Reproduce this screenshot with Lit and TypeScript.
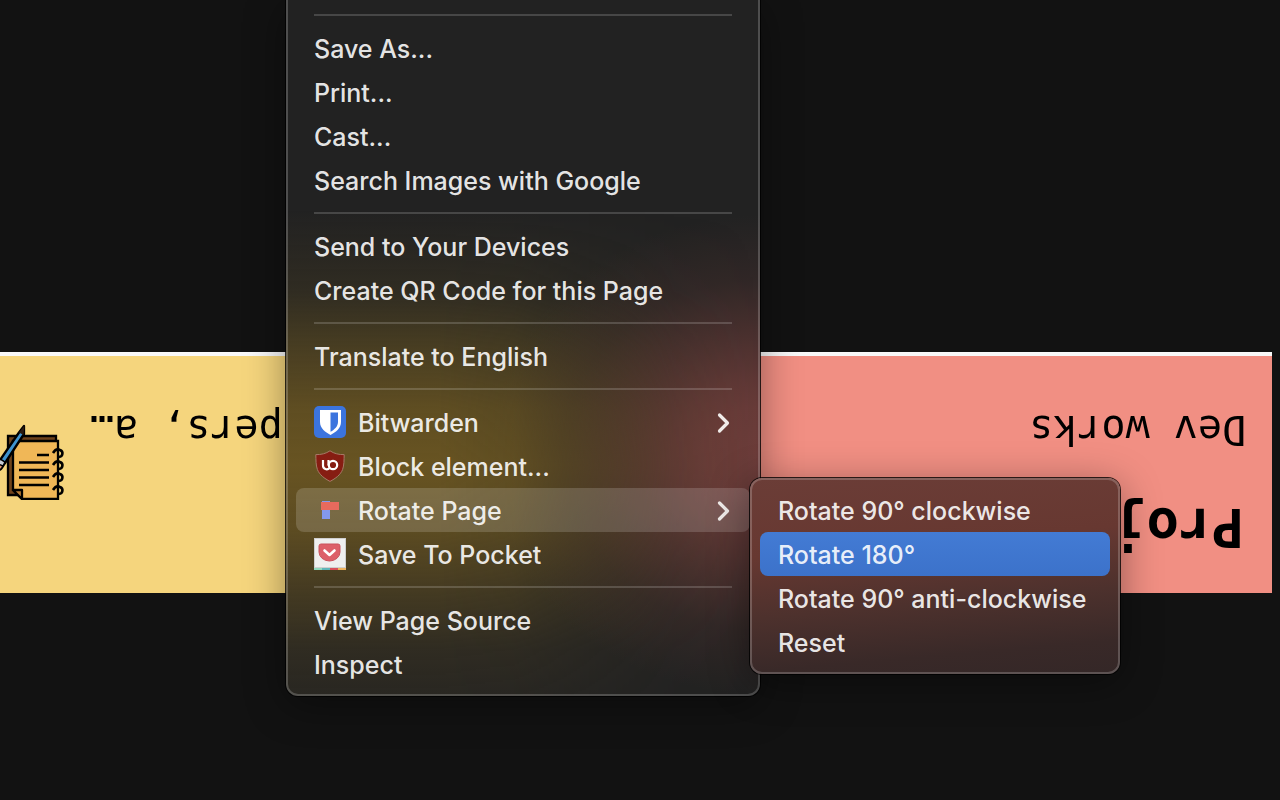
import { LitElement, html, css, svg, nothing } from "lit";
import { customElement } from "lit/decorators.js";
import { classMap } from "lit/directives/class-map.js";

type Entry =
  | { kind: "separator" }
  | { kind: "item"; label: string; icon?: unknown; submenu?: boolean; active?: boolean; selected?: boolean };

const item = (label: string, extra: object = {}): Entry => ({ kind: "item", label, ...extra });
const separator: Entry = { kind: "separator" };

const bitwardenIcon = svg`
  <rect width="32" height="32" rx="5" fill="#3b74de"/>
  <path d="M6 4H27V16C27 22 22 26 16.500 29C11 26 6 22 6 16Z" fill="#fff"/>
  <path d="M16.500 6.500H24V16C24 20.500 20.500 23.500 16.500 25.800Z" fill="#3b74de"/>`;

const ublockIcon = svg`
  <path d="M16 .8C12 3.600 7 4.800 1.800 4.600C2 10 1.800 15 3.400 19.500C5.400 24.800 10.500 28.500 16 31.400C21.500 28.500 26.600 24.800 28.600 19.500C30.200 15 30 10 30.200 4.600C25 4.800 20 3.600 16 .8Z" fill="#861d12" stroke="#a57b67" stroke-width="1"/>
  <path d="M9 10V15.500A3.700 3.700 0 0 0 15.500 18" fill="none" stroke="#fff" stroke-width="2.200"/>
  <path d="M14.500 10V15.500" fill="none" stroke="#fff" stroke-width="2.200"/>
  <circle cx="19" cy="15" r="4.200" fill="none" stroke="#fff" stroke-width="2.200"/>`;

const rotateIcon = svg`
  <rect x="8" y="7" width="8" height="18" fill="#8398ec"/>
  <rect x="7" y="8" width="18" height="8" fill="#e86a5d"/>`;

const pocketIcon = svg`
  <rect width="32" height="32" fill="#cfcfcf"/>
  <rect x="1" y="1" width="30" height="28" fill="#efefef"/>
  <rect y="30" width="8" height="2" fill="#8fd8bd"/>
  <rect x="8" y="30" width="8" height="2" fill="#5fb5ba"/>
  <rect x="16" y="30" width="8" height="2" fill="#d9505c"/>
  <rect x="24" y="30" width="8" height="2" fill="#efb35e"/>
  <path d="M7 6H24Q26 6 26 8V14A10.500 9 0 0 1 5 14V8Q5 6 7 6Z" fill="#dd5f69" stroke="#c9535c" stroke-width="1"/>
  <path d="M10.500 12.500L15.500 17L20.500 12.500" fill="none" stroke="#fff" stroke-width="2.600" stroke-linecap="round" stroke-linejoin="round"/>`;

const notebookIcon = svg`
  <path d="M9 436H57V490L20 495H9Z" fill="#6f431b" stroke="#000" stroke-width="2.300"/>
  <path d="M14 441H59V499H23L14 490Z" fill="#f0b757" stroke="#000" stroke-width="2.300"/>
  <path d="M14 490H23V499Z" fill="#b57a35" stroke="#000" stroke-width="2.300" stroke-linejoin="round"/>
  <path d="M38 455H50M20 462.500H50M20 470H50M20 477.500H50M20 485H50" stroke="#000" stroke-width="2.400"/>
  <g fill="none" stroke="#000" stroke-width="2.600">
    <path d="M54 453Q57 448 61 450A3.600 3.600 0 0 1 60 457"/>
    <path d="M54 465Q57 460 61 462A3.600 3.600 0 0 1 60 469"/>
    <path d="M54 477Q57 472 61 474A3.600 3.600 0 0 1 60 481"/>
    <path d="M54 490Q57 485 61 487A3.600 3.600 0 0 1 60 494"/>
  </g>
  <path d="M20 432.500L25 426L25 434L6 463L1 460Z" fill="#3f93cf" stroke="#000" stroke-width="2.300" stroke-linejoin="round"/>
  <path d="M20 432.500L25.500 425.500L24.500 435Z" fill="#2a1a10"/>
  <path d="M1 460L6 463L3 468Q1 471 -3 470Q-1 466 1 460Z" fill="#e79c72" stroke="#000" stroke-width="2"/>
  <path d="M1 459L6 462L4 466L-1 464Z" fill="#c9ced6" stroke="#000" stroke-width="1.500"/>`;

@customElement("context-menu")
class ContextMenu extends LitElement {
  static properties = { entries: { attribute: false } };
  declare entries: Entry[];

  static styles = css`
    :host {
      display: block;
    }
    .list {
      list-style: none;
      margin: 0;
      padding: 0;
    }
    .row {
      display: flex;
      align-items: center;
      gap: 12px;
      width: 100%;
      height: 44px;
      padding: 2px 18px 0;
      border: 0;
      border-radius: 8px;
      background: none;
      color: rgba(255, 255, 255, 0.9);
      font: 500 25px/42px Inter, "Liberation Sans", sans-serif;
      text-align: left;
      white-space: nowrap;
      box-sizing: border-box;
    }
    .active {
      background: rgba(255, 255, 255, 0.16);
    }
    .selected {
      background: linear-gradient(#437bd4, #3c72ca);
    }
    .label {
      flex: 1;
    }
    .icon {
      width: 32px;
      height: 32px;
      flex: none;
      margin-top: -2px;
    }
    .chevron {
      width: 16px;
      height: 24px;
      flex: none;
      margin-top: -2px;
    }
    .separator {
      height: 2px;
      margin: 10px 18px;
      background: rgba(255, 255, 255, 0.17);
    }
  `;

  render() {
    return html`<ul class="list" role="menu">
      ${this.entries.map((e) =>
        e.kind === "separator"
          ? html`<li class="separator" role="separator"></li>`
          : html`<li role="none">
              <button
                class=${classMap({ row: true, active: !!e.active, selected: !!e.selected })}
                role="menuitem"
                type="button"
              >
                ${e.icon ? html`<svg class="icon" viewBox="0 0 32 32" aria-hidden="true">${e.icon}</svg>` : nothing}
                <span class="label">${e.label}</span>
                ${e.submenu
                  ? html`<svg class="chevron" viewBox="0 0 16 24" aria-hidden="true">
                      <path d="M3.500 5L11.500 13L3.500 21" fill="none" stroke="#f0ecea" stroke-width="3.200" stroke-linecap="round" stroke-linejoin="round" />
                    </svg>`
                  : nothing}
              </button>
            </li>`
      )}
    </ul>`;
  }
}

@customElement("app-root")
class AppRoot extends LitElement {
  static styles = css`
    :host {
      display: block;
      position: relative;
      min-height: 100vh;
      overflow: hidden;
      background: #121212;
    }
    .page {
      min-height: 100vh;
      box-sizing: border-box;
      padding: 207px 0 0 8px;
      transform: rotate(180deg);
      color: #000;
      font-family: "DejaVu Sans Mono", monospace;
    }
    .band {
      display: grid;
      grid-template-columns: 1fr 1fr;
      border-bottom: 4px solid #f8f8f8;
    }
    .card {
      padding: 34px 24px 50px 26px;
      box-sizing: border-box;
    }
    .projects {
      background: #f18f83;
    }
    .notes {
      display: flex;
      align-items: flex-end;
      justify-content: flex-end;
      gap: 24px;
      padding-right: 0;
      background: #f5d57d;
    }
    .title {
      margin: 0 0 41px;
      padding-left: 2px;
      font-size: 54px;
      line-height: 64px;
      font-weight: 700;
    }
    .text {
      margin: 0;
      font-size: 40px;
      line-height: 48px;
    }
    .notebook {
      width: 66px;
      height: 76px;
      flex: none;
      margin-bottom: 18px;
      transform: rotate(180deg);
    }
    .menu,
    .submenu {
      position: absolute;
      box-sizing: border-box;
      padding: 10px;
      border-radius: 12px;
      isolation: isolate;
      box-shadow: 0 0 0 1px rgba(0, 0, 0, 0.8), 0 8px 40px rgba(0, 0, 0, 0.4);
    }
    .menu::after,
    .submenu::after {
      content: "";
      position: absolute;
      inset: 0;
      border: 2px solid rgba(255, 255, 255, 0.2);
      border-radius: inherit;
      pointer-events: none;
    }
    .menu {
      left: 286px;
      top: 0;
      width: 474px;
      padding-top: 4px;
      border-radius: 0 0 12px 12px;
      background: radial-gradient(
          270px 240px at 100% 455px,
          rgba(108, 60, 58, 1) 0%,
          rgba(108, 60, 58, 0.93) 20%,
          rgba(108, 60, 58, 0.8) 32%,
          rgba(108, 60, 58, 0.5) 52%,
          rgba(108, 60, 58, 0.2) 73%,
          rgba(108, 60, 58, 0) 100%
        ),
        #222;
    }
    .menu::before {
      content: "";
      position: absolute;
      inset: 0;
      z-index: -1;
      border-radius: inherit;
      background: linear-gradient(
        rgba(104, 84, 34, 0) 210px,
        rgba(104, 84, 34, 0.2) 290px,
        rgba(104, 84, 34, 0.56) 350px,
        rgba(104, 84, 34, 0.88) 410px,
        rgba(104, 84, 34, 1) 465px,
        rgba(104, 84, 34, 0.84) 530px,
        rgba(104, 84, 34, 0.5) 590px,
        rgba(104, 84, 34, 0.2) 650px,
        rgba(104, 84, 34, 0.1) 696px
      );
      mask-image: linear-gradient(
        to right,
        rgba(0, 0, 0, 1) 32%,
        rgba(0, 0, 0, 0.88) 48%,
        rgba(0, 0, 0, 0.45) 66%,
        rgba(0, 0, 0, 0.12) 82%,
        rgba(0, 0, 0, 0) 100%
      );
    }
    .menu::after {
      border-top: 0;
    }
    .submenu {
      left: 750px;
      top: 478px;
      width: 370px;
      background: linear-gradient(175deg, #6b3d37 0%, #673831 35%, #4d312d 62%, #392928 85%, #342727 100%);
    }
  `;

  private main: Entry[] = [
    separator,
    item("Save As..."),
    item("Print..."),
    item("Cast..."),
    item("Search Images with Google"),
    separator,
    item("Send to Your Devices"),
    item("Create QR Code for this Page"),
    separator,
    item("Translate to English"),
    separator,
    item("Bitwarden", { icon: bitwardenIcon, submenu: true }),
    item("Block element...", { icon: ublockIcon }),
    item("Rotate Page", { icon: rotateIcon, submenu: true, active: true }),
    item("Save To Pocket", { icon: pocketIcon }),
    separator,
    item("View Page Source"),
    item("Inspect"),
  ];

  private rotations: Entry[] = [
    item("Rotate 90° clockwise"),
    item("Rotate 180°", { selected: true }),
    item("Rotate 90° anti-clockwise"),
    item("Reset"),
  ];

  render() {
    return html`
      <main class="page">
        <div class="band">
          <section class="card projects">
            <h2 class="title">Proj</h2>
            <p class="text">Dev works</p>
          </section>
          <section class="card notes">
            <p class="text">pers, a…</p>
            <svg class="notebook" viewBox="1 424 66 76" aria-hidden="true">${notebookIcon}</svg>
          </section>
        </div>
      </main>
      <div class="menu"><context-menu .entries=${this.main}></context-menu></div>
      <div class="submenu"><context-menu .entries=${this.rotations}></context-menu></div>
    `;
  }
}
